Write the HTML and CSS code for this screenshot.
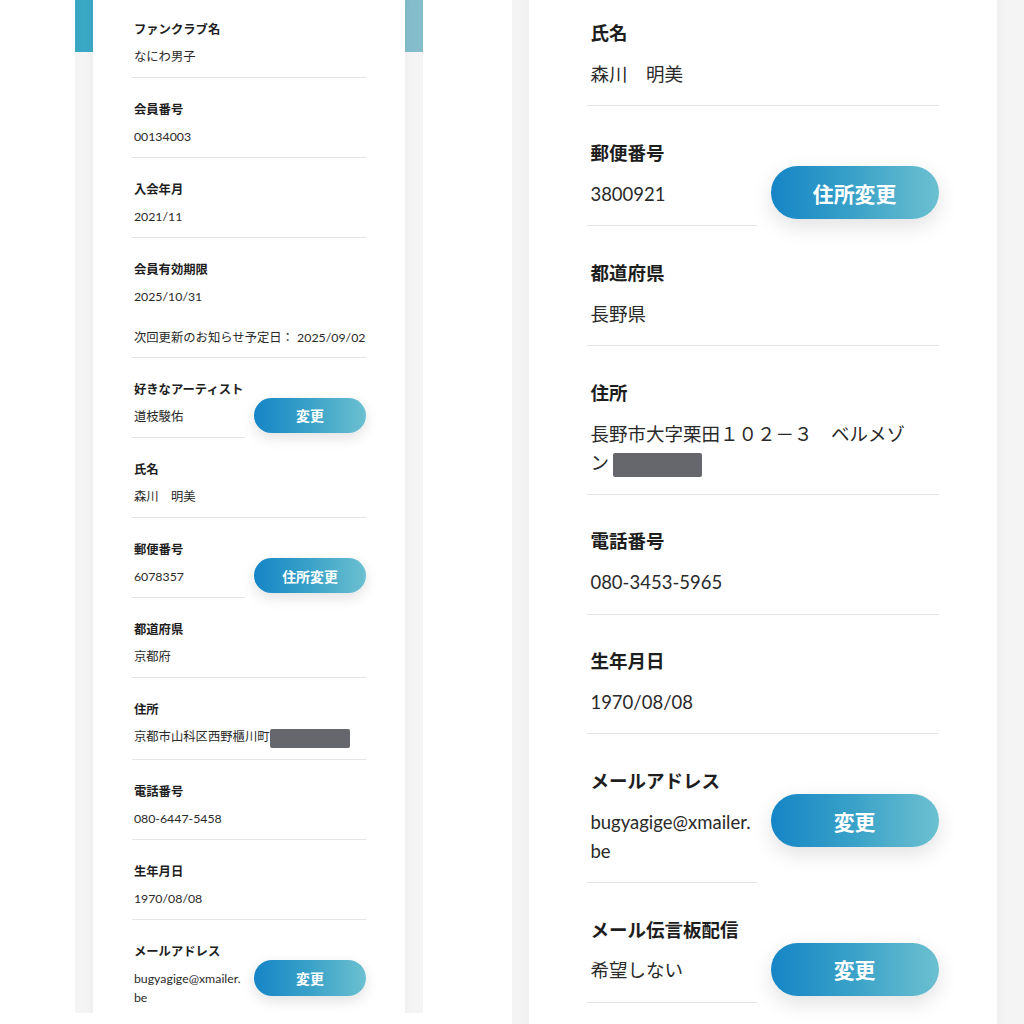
FILE: index.html
```html
<!DOCTYPE html>
<html lang="ja">
<head>
<meta charset="utf-8">
<title>会員情報</title>
<link rel="stylesheet" href="styles.css">
</head>
<body>
<div class="page">
  <section class="panel panel-small">
    <div class="panel-header"></div>
    <div class="card card-small">
      <div class="row">
        <div class="field">
          <div class="label">ファンクラブ名</div>
          <div class="value">なにわ男子</div>
        </div>
      </div>
      <div class="row">
        <div class="field">
          <div class="label">会員番号</div>
          <div class="value">00134003</div>
        </div>
      </div>
      <div class="row">
        <div class="field">
          <div class="label">入会年月</div>
          <div class="value">2021/11</div>
        </div>
      </div>
      <div class="row">
        <div class="field">
          <div class="label">会員有効期限</div>
          <div class="value">2025/10/31</div>
          <div class="value note">次回更新のお知らせ予定日： 2025/09/02</div>
        </div>
      </div>
      <div class="row">
        <div class="field field-short">
          <div class="label">好きなアーティスト</div>
          <div class="value">道枝駿佑</div>
        </div>
        <button class="btn">変更</button>
      </div>
      <div class="row">
        <div class="field">
          <div class="label">氏名</div>
          <div class="value">森川　明美</div>
        </div>
      </div>
      <div class="row">
        <div class="field field-short">
          <div class="label">郵便番号</div>
          <div class="value">6078357</div>
        </div>
        <button class="btn">住所変更</button>
      </div>
      <div class="row">
        <div class="field">
          <div class="label">都道府県</div>
          <div class="value">京都府</div>
        </div>
      </div>
      <div class="row">
        <div class="field">
          <div class="label">住所</div>
          <div class="value">京都市山科区西野櫃川町<span class="redact redact-a"></span></div>
        </div>
      </div>
      <div class="row">
        <div class="field">
          <div class="label">電話番号</div>
          <div class="value">080-6447-5458</div>
        </div>
      </div>
      <div class="row">
        <div class="field">
          <div class="label">生年月日</div>
          <div class="value">1970/08/08</div>
        </div>
      </div>
      <div class="row">
        <div class="field field-short">
          <div class="label">メールアドレス</div>
          <div class="value">bugyagige@xmailer.<wbr>be</div>
        </div>
        <button class="btn">変更</button>
      </div>
    </div>
  </section>

  <section class="panel panel-large">
    <div class="card card-large">
      <div class="row">
        <div class="field">
          <div class="label">氏名</div>
          <div class="value">森川　明美</div>
        </div>
      </div>
      <div class="row">
        <div class="field field-short">
          <div class="label">郵便番号</div>
          <div class="value">3800921</div>
        </div>
        <button class="btn">住所変更</button>
      </div>
      <div class="row">
        <div class="field">
          <div class="label">都道府県</div>
          <div class="value">長野県</div>
        </div>
      </div>
      <div class="row">
        <div class="field">
          <div class="label">住所</div>
          <div class="value jp">長野市大字栗田１０２－３　ベルメゾ<br>ン <span class="redact redact-b"></span></div>
        </div>
      </div>
      <div class="row">
        <div class="field">
          <div class="label">電話番号</div>
          <div class="value">080-3453-5965</div>
        </div>
      </div>
      <div class="row">
        <div class="field">
          <div class="label">生年月日</div>
          <div class="value">1970/08/08</div>
        </div>
      </div>
      <div class="row">
        <div class="field field-short">
          <div class="label">メールアドレス</div>
          <div class="value">bugyagige@xmailer.<wbr>be</div>
        </div>
        <button class="btn">変更</button>
      </div>
      <div class="row">
        <div class="field field-short">
          <div class="label">メール伝言板配信</div>
          <div class="value">希望しない</div>
        </div>
        <button class="btn">変更</button>
      </div>
    </div>
  </section>
</div>
</body>
</html>
```

FILE: styles.css
```css
html, body {
  margin: 0;
  padding: 0;
  background: #ffffff;
  overflow: hidden;
}

body {
  font-family: "Noto Sans CJK JP", "Noto Sans", sans-serif;
  color: #333333;
}

.page {
  display: flex;
  align-items: flex-start;
  height: 1024px;
}

.panel {
  position: relative;
  overflow: hidden;
  background: #f4f4f4;
  flex: none;
}

.panel-small {
  font-size: 12.33px;
  margin-left: 75px;
  width: 348px;
  height: 1013px;
}

.panel-large {
  font-size: 18.5px;
  margin-left: 89px;
  width: 512px;
  height: 1024px;
}

.panel-header {
  position: absolute;
  left: 0;
  right: 0;
  top: 0;
  height: 52px;
  background: linear-gradient(90deg, #37a7c5 0%, #5fb2c9 50%, #87bdcb 100%);
}

.card {
  position: relative;
  z-index: 1;
  background: #ffffff;
  width: 25.3em;
  box-sizing: border-box;
  padding: 0 3.16em;
  box-shadow: 0 0 0.8em rgba(0, 0, 0, 0.04);
  min-height: calc(100% + 2em);
}

.card-small {
  margin: -0.17em 0 0 18px;
}

.card-large {
  margin: -0.74em 0 0 17px;
}

.row {
  display: flex;
  align-items: flex-start;
}

.field {
  flex: 1 1 auto;
  padding: 1.77em 0 0.9em;
  border-bottom: 1px solid #e4e4e4;
}

.field-short {
  flex: 0 0 9.15em;
  width: 9.15em;
}

.label {
  font-weight: 700;
  color: #1e1e1e;
  line-height: 1.46em;
  padding-left: 0.16em;
  white-space: nowrap;
}

.value {
  margin-top: 0.745em;
  line-height: 1.55em;
  padding-left: 0.16em;
  font-family: Lato, "Noto Sans CJK JP", sans-serif;
  color: #2a2a2a;
}

.value.jp {
  font-family: "Noto Sans CJK JP", sans-serif;
}

.value.note {
  margin-top: 1.77em;
  margin-bottom: -0.15em;
  white-space: nowrap;
}

.btn {
  flex: none;
  margin: 2.87em 0 0 auto;
  width: 8.04em;
  height: 2.53em;
  border: none;
  border-radius: 1.5em;
  padding: 0;
  background: linear-gradient(90deg, #1585c6 0%, #3aa2c8 50%, #6cc0d0 100%);
  color: #ffffff;
  font-family: "Noto Sans CJK JP", sans-serif;
  font-weight: 700;
  font-size: 1.13em;
  box-shadow: 0 0.35em 1em rgba(0, 0, 0, 0.12);
}

.redact {
  display: inline-block;
  vertical-align: middle;
  background: #66676c;
  border-radius: 2px;
}

.redact-a {
  width: 6.5em;
  height: 1.55em;
  margin-left: 0.05em;
}

.redact-b {
  width: 4.8em;
  height: 1.3em;
}
```
